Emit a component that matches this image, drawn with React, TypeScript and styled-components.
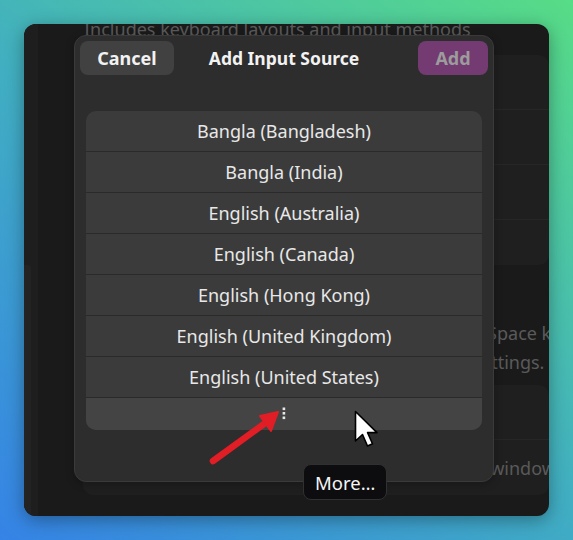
import React from "react";
import styled, { createGlobalStyle } from "styled-components";

const Global = createGlobalStyle`
  html, body { margin: 0; padding: 0; }
  body { font-family: "Noto Sans", "Open Sans", sans-serif; }
`;

const inputSources = [
  "Bangla (Bangladesh)",
  "Bangla (India)",
  "English (Australia)",
  "English (Canada)",
  "English (Hong Kong)",
  "English (United Kingdom)",
  "English (United States)",
];

export default function App() {
  return (
    <>
      <Global />
      <Page>
        <Window>
          <Sidebar>
            <ScrollNub />
          </Sidebar>

          <Content>
            <Desc>Includes keyboard layouts and input methods</Desc>
            <ListBox $top={15}>
              <BgRow $h={55} />
              <BgRow $h={55} />
              <BgRow $h={55} />
              <BgRow $h={45} $last />
            </ListBox>
            <Hint>
              <div>Input sources can be switched using the Super+Space keyboard shortcut.</div>
              <div>This can be changed in the keyboard shortcut settings.</div>
            </Hint>
            <ListBox $top={8}>
              <BgRow $h={55}>
                <Radio />
                Use the same source for all windows
              </BgRow>
              <BgRow $h={55} $last>
                <Radio />
                Switch input sources individually for each window
              </BgRow>
            </ListBox>
          </Content>

          <Dialog>
            <Header>
              <HeaderButton>Cancel</HeaderButton>
              <Title>Add Input Source</Title>
              <HeaderButton $accent>Add</HeaderButton>
            </Header>
            <SourceList>
              {inputSources.map((name) => (
                <SourceRow key={name}>{name}</SourceRow>
              ))}
              <MoreRow>
                <svg width="4" height="14" viewBox="0 0 4 14">
                  <rect x="0.6" y="0.5" width="2.6" height="2.6" fill="#e6e6e6" />
                  <rect x="0.6" y="5" width="2.6" height="2.6" fill="#e6e6e6" />
                  <rect x="0.6" y="9.5" width="2.6" height="2.6" fill="#e6e6e6" />
                </svg>
              </MoreRow>
            </SourceList>
          </Dialog>

          <Tooltip>More…</Tooltip>
        </Window>

        <Annotation width="80" height="60" viewBox="0 0 80 60" $left={204} $top={406}>
          <line x1="9" y1="55" x2="64" y2="15" stroke="#e11d25" strokeWidth="6.5" strokeLinecap="round" />
          <polygon points="74,6 56,10 67,25" fill="#e11d25" stroke="#e11d25" strokeWidth="2" strokeLinejoin="round" />
        </Annotation>

        <Annotation width="30" height="44" viewBox="0 0 30 44" $left={354} $top={410}>
          <path
            d="M1.5 1.5 L1.5 31 L8.5 24.5 L13.5 36 L18.5 33.8 L13.6 22.6 L23 22.6 Z"
            fill="#fff"
            stroke="#000"
            strokeWidth="1.6"
            strokeLinejoin="round"
          />
        </Annotation>
      </Page>
    </>
  );
}

const Page = styled.div`
  position: relative;
  width: 573px;
  height: 540px;
  box-sizing: border-box;
  padding: 24px;
  background: linear-gradient(37deg, #3583e6 0%, #41aec2 48%, #57dc86 100%);
  overflow: hidden;
`;

const Window = styled.div`
  position: relative;
  display: flex;
  width: 525px;
  height: 492px;
  border-radius: 12px;
  background: #1a1a1a;
  overflow: hidden;
  box-shadow: 0 4px 18px rgba(0, 0, 0, 0.35);
`;

const Sidebar = styled.div`
  width: 14px;
  flex-shrink: 0;
  background: #1e1e1e;
  display: flex;
  flex-direction: column;
  justify-content: flex-end;
`;

const ScrollNub = styled.div`
  width: 7px;
  height: 251px;
  background: #232323;
  border-top-right-radius: 3px;
`;

const Content = styled.div`
  flex: 1;
  min-width: 0;
  display: flex;
  flex-direction: column;
  padding-left: 45px;
  margin-top: -6px;
  color: #5a5a5a;
  font-size: 18px;
  white-space: nowrap;
`;

const Desc = styled.div`
  line-height: 22px;
  margin-left: 1px;
`;

const ListBox = styled.div<{ $top: number }>`
  margin-top: ${(p) => p.$top}px;
  background: #1f1f1f;
  border-radius: 10px;
  overflow: hidden;
`;

const BgRow = styled.div<{ $h: number; $last?: boolean }>`
  height: ${(p) => p.$h - (p.$last ? 0 : 1)}px;
  display: flex;
  align-items: center;
  gap: 12px;
  padding-left: 24px;
  border-bottom: ${(p) => (p.$last ? "none" : "1px solid #262626")};
`;

const Radio = styled.span`
  width: 14px;
  height: 14px;
  border-radius: 50%;
  border: 2px solid #3a3a3a;
  flex-shrink: 0;
`;

const Hint = styled.div`
  margin-top: 54px;
  line-height: 29px;
`;

const Dialog = styled.div`
  position: absolute;
  left: 50px;
  top: 11px;
  width: 420px;
  height: 447px;
  box-sizing: border-box;
  background: #2d2d2d;
  border: 1px solid #3a3a3a;
  border-radius: 12px;
  display: flex;
  flex-direction: column;
  box-shadow: 0 2px 8px rgba(0, 0, 0, 0.25);
`;

const Header = styled.div`
  display: grid;
  grid-template-columns: 1fr auto 1fr;
  align-items: center;
  padding: 5px 5px 0;
`;

const HeaderButton = styled.div<{ $accent?: boolean }>`
  justify-self: ${(p) => (p.$accent ? "end" : "start")};
  height: 34px;
  width: ${(p) => (p.$accent ? 70 : 94)}px;
  display: flex;
  align-items: center;
  justify-content: center;
  border-radius: 8px;
  background: ${(p) => (p.$accent ? "#733b71" : "#414141")};
  color: ${(p) => (p.$accent ? "#9c9c9c" : "#f2f2f2")};
  font-size: 18px;
  font-weight: 700;
`;

const Title = styled.div`
  color: #f2f2f2;
  font-size: 17.5px;
  font-weight: 700;
`;

const SourceList = styled.div`
  margin: 36px 11px 0;
  background: #3b3b3b;
  border-radius: 10px;
  overflow: hidden;
`;

const SourceRow = styled.div`
  height: 40px;
  border-bottom: 1px solid #2a2a2a;
  display: flex;
  align-items: center;
  justify-content: center;
  color: #e8e8e8;
  font-size: 18px;
`;

const MoreRow = styled.div`
  height: 32px;
  background: #444444;
  display: flex;
  align-items: center;
  justify-content: center;
`;

const Tooltip = styled.div`
  position: absolute;
  left: 279px;
  top: 440px;
  height: 36px;
  box-sizing: border-box;
  padding: 0 11px;
  display: flex;
  align-items: center;
  background: #0d0d10;
  border: 1px solid #303030;
  border-radius: 8px;
  color: #f5f5f5;
  font-size: 18.5px;
`;

const Annotation = styled.svg<{ $left: number; $top: number }>`
  position: absolute;
  left: ${(p) => p.$left}px;
  top: ${(p) => p.$top}px;
  overflow: visible;
`;
